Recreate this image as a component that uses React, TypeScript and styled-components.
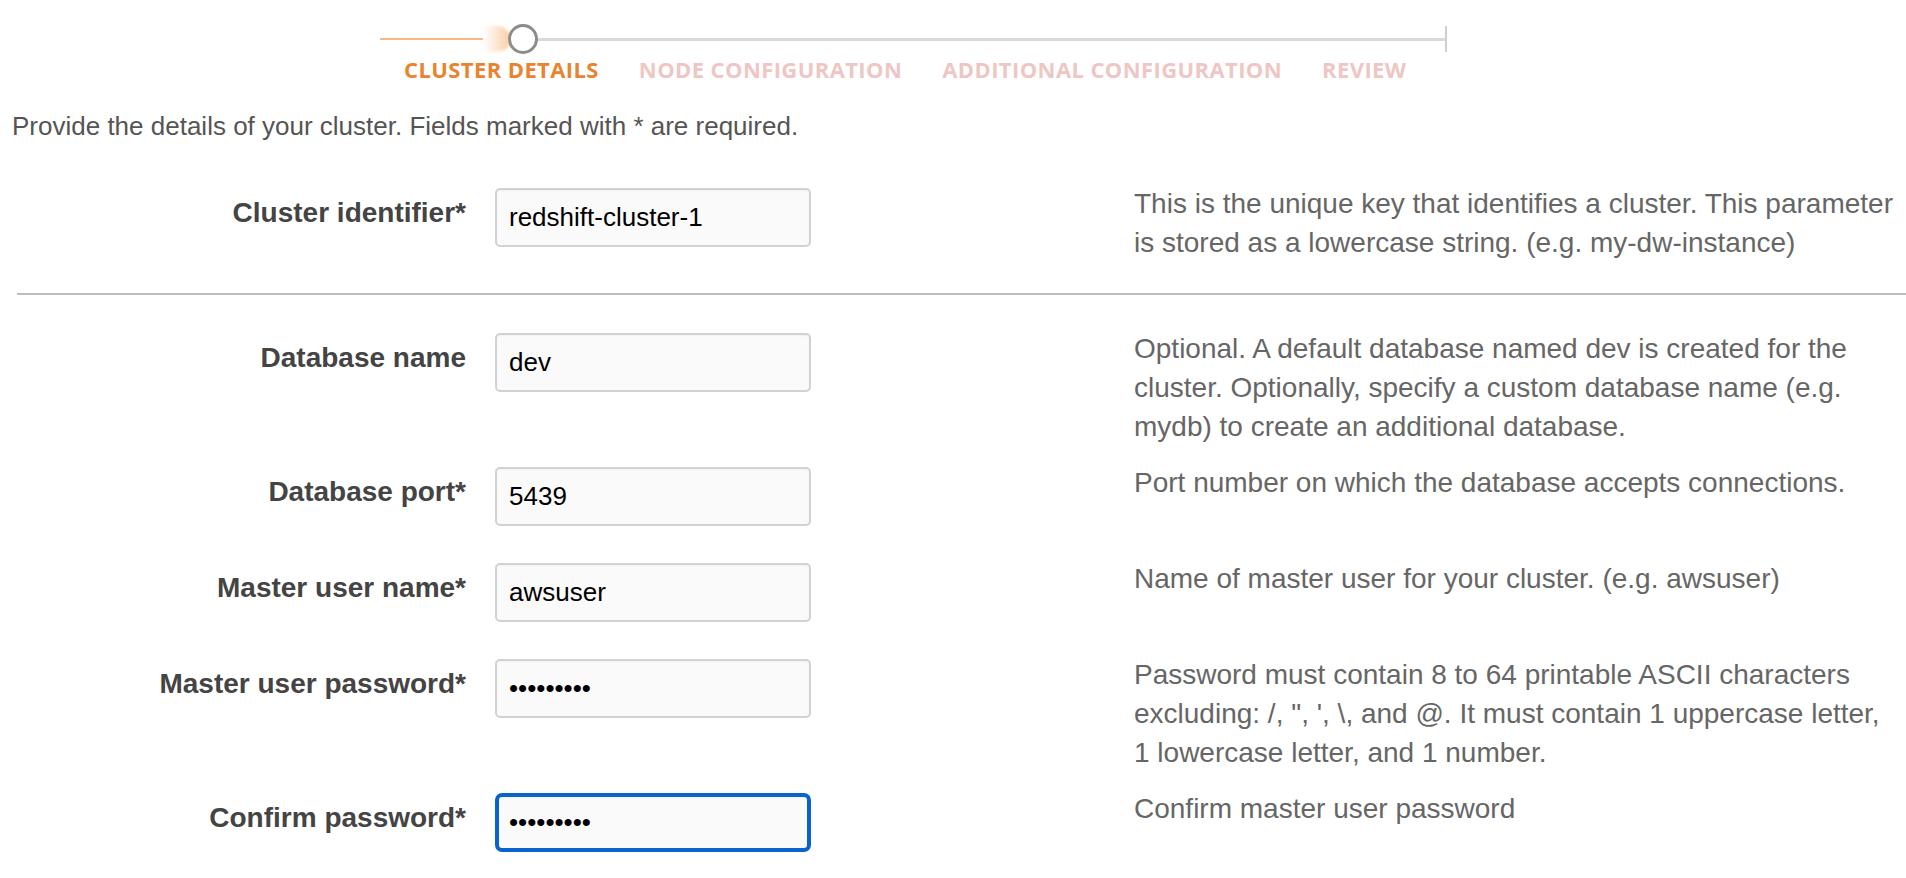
import React from "react";
import styled, { createGlobalStyle } from "styled-components";

const GlobalStyle = createGlobalStyle`
  html, body { margin: 0; padding: 0; background: #ffffff; }
  body { font-family: "Liberation Sans", Arial, Helvetica, sans-serif; }
  * { box-sizing: border-box; }
`;

const Page = styled.div`
  width: 1906px;
  min-height: 878px;
  overflow: hidden;
`;

const Stepper = styled.div`
  margin-left: 380px;
  width: 1067px;
  padding-top: 24px;
`;

const Track = styled.div`
  display: flex;
  align-items: center;
  height: 30px;
`;

const DoneLine = styled.div`
  width: 103px;
  height: 2px;
  background: #f4b889;
`;

const Glow = styled.div`
  width: 28px;
  height: 26px;
  margin-right: -3px;
  background: repeating-linear-gradient(
      to bottom,
      rgba(255, 255, 255, 0) 0px,
      rgba(255, 255, 255, 0) 3px,
      rgba(255, 255, 255, 0.5) 4px,
      rgba(255, 255, 255, 0) 5px
    ),
    linear-gradient(to right, rgba(246, 178, 110, 0), rgba(244, 160, 85, 0.6));
  filter: blur(1.5px);
  border-radius: 0 50% 50% 0;
`;

const Knob = styled.div`
  position: relative;
  z-index: 1;
  width: 30px;
  height: 30px;
  border: 3px solid #8c8c8c;
  border-radius: 50%;
  background: #ffffff;
  flex: none;
`;

const RestLine = styled.div`
  flex: 1;
  height: 3px;
  background: #dadada;
`;

const EndTick = styled.div`
  width: 2px;
  height: 26px;
  background: #cfcfcf;
`;

const Steps = styled.div`
  display: flex;
  gap: 40px;
  margin: 2px 0 0 24px;
`;

const StepLabel = styled.div<{ $active?: boolean }>`
  font-family: "Open Sans", "Liberation Sans", sans-serif;
  font-weight: 700;
  font-size: 22px;
  line-height: 26px;
  letter-spacing: 0.4px;
  text-transform: uppercase;
  white-space: nowrap;
  color: ${(p) => (p.$active ? "#e8832f" : "#eec6c4")};
`;

const Intro = styled.p`
  margin: 29px 0 0 12px;
  font-size: 26px;
  line-height: 30px;
  color: #555555;
`;

const Form = styled.div`
  margin-top: 47px;
`;

const Row = styled.div`
  display: grid;
  grid-template-columns: 466px 316px 1fr;
  column-gap: 29px;
  align-items: start;
`;

const Label = styled.label`
  text-align: right;
  font-weight: 700;
  font-size: 28px;
  line-height: 32px;
  color: #444444;
  padding-top: 9px;
  white-space: nowrap;
`;

const FieldCell = styled.div`
  padding-bottom: 37px;
`;

const Input = styled.input<{ $focused?: boolean }>`
  display: block;
  width: 100%;
  height: 59px;
  margin: 0;
  border: ${(p) => (p.$focused ? "4px solid #0a62cc" : "2px solid #d2d2d2")};
  border-radius: ${(p) => (p.$focused ? "7px" : "5px")};
  background: #fafafa;
  padding: 0 0 0 ${(p) => (p.$focused ? "10px" : "12px")};
  font-family: "Liberation Sans", Arial, Helvetica, sans-serif;
  font-size: 26px;
  color: #000000;
  outline: none;
  box-shadow: inset 0 1px 2px rgba(0, 0, 0, 0.04);
`;

const Help = styled.div`
  margin: -4px 9px 0 294px;
  padding-bottom: 21px;
  font-size: 28px;
  line-height: 39px;
  color: #666666;
`;

const Divider = styled.hr`
  margin: 9px 0 38px 17px;
  border: 0;
  height: 2px;
  background: #bdbdbd;
`;

type Field = {
  label: string;
  value: string;
  help: string;
  password?: boolean;
  focused?: boolean;
};

const first: Field = {
  label: "Cluster identifier*",
  value: "redshift-cluster-1",
  help: "This is the unique key that identifies a cluster. This parameter is stored as a lowercase string. (e.g. my-dw-instance)",
};

const rest: Field[] = [
  {
    label: "Database name",
    value: "dev",
    help: "Optional. A default database named dev is created for the cluster. Optionally, specify a custom database name (e.g. mydb) to create an additional database.",
  },
  {
    label: "Database port*",
    value: "5439",
    help: "Port number on which the database accepts connections.",
  },
  {
    label: "Master user name*",
    value: "awsuser",
    help: "Name of master user for your cluster. (e.g. awsuser)",
  },
  {
    label: "Master user password*",
    value: "Abcdefg12",
    password: true,
    help: "Password must contain 8 to 64 printable ASCII characters excluding: /, \", ', \\, and @. It must contain 1 uppercase letter, 1 lowercase letter, and 1 number.",
  },
  {
    label: "Confirm password*",
    value: "Abcdefg12",
    password: true,
    focused: true,
    help: "Confirm master user password",
  },
];

const FormRow = ({ f }: { f: Field }) => (
  <Row>
    <Label>{f.label}</Label>
    <FieldCell>
      <Input
        type={f.password ? "password" : "text"}
        defaultValue={f.value}
        $focused={f.focused}
        readOnly
      />
    </FieldCell>
    <Help>{f.help}</Help>
  </Row>
);

export default function App() {
  return (
    <Page>
      <GlobalStyle />
      <Stepper>
        <Track>
          <DoneLine />
          <Glow />
          <Knob />
          <RestLine />
          <EndTick />
        </Track>
        <Steps>
          <StepLabel $active>Cluster Details</StepLabel>
          <StepLabel>Node Configuration</StepLabel>
          <StepLabel>Additional Configuration</StepLabel>
          <StepLabel>Review</StepLabel>
        </Steps>
      </Stepper>
      <Intro>Provide the details of your cluster. Fields marked with * are required.</Intro>
      <Form>
        <FormRow f={first} />
        <Divider />
        {rest.map((f) => (
          <FormRow key={f.label} f={f} />
        ))}
      </Form>
    </Page>
  );
}
